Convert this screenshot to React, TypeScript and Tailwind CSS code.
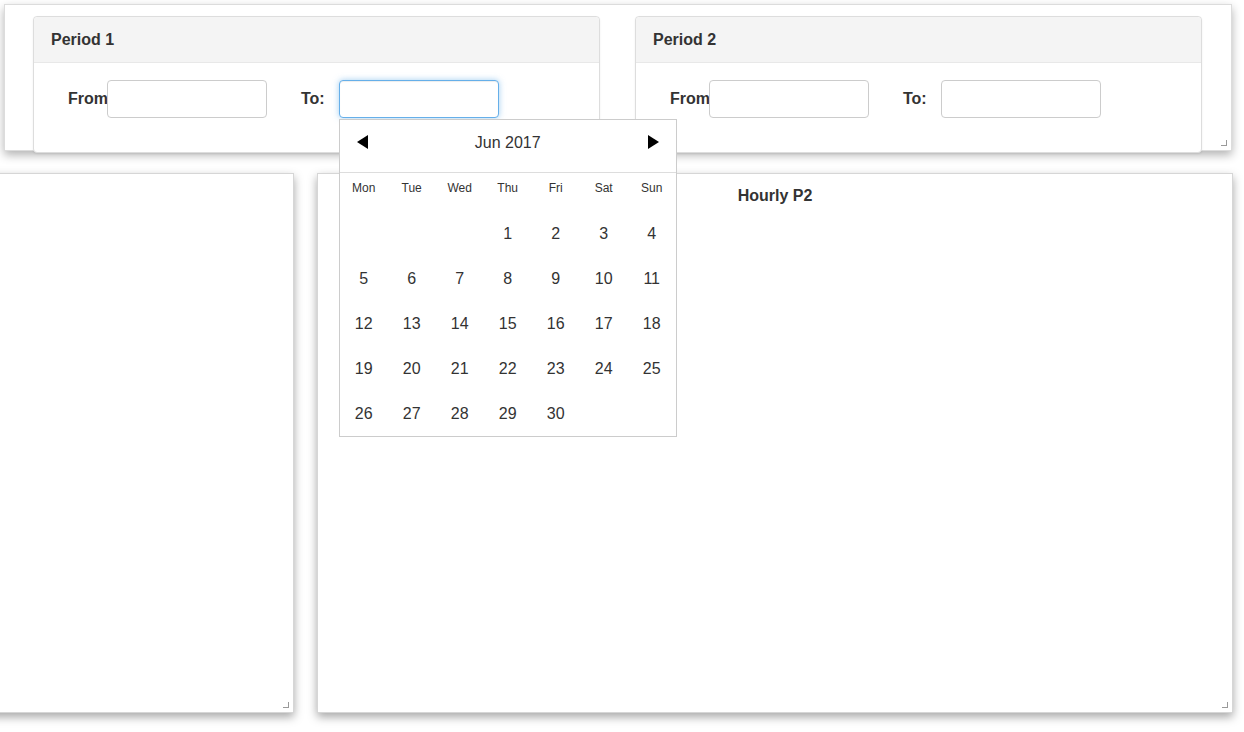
import React from 'react';

const days = ['Mon', 'Tue', 'Wed', 'Thu', 'Fri', 'Sat', 'Sun'];

// June 2017 starts on a Thursday
const weeks: (number | null)[][] = [
  [null, null, null, 1, 2, 3, 4],
  [5, 6, 7, 8, 9, 10, 11],
  [12, 13, 14, 15, 16, 17, 18],
  [19, 20, 21, 22, 23, 24, 25],
  [26, 27, 28, 29, 30, null, null],
];

function ResizeHandle() {
  return (
    <div className="absolute right-[4px] bottom-[4px] w-[6px] h-[6px] border-r border-b border-[#9a9a9a]" />
  );
}

function Calendar() {
  return (
    <div className="absolute left-0 top-[39px] w-[338px] bg-white border border-[#ccc] z-20 text-[#333] font-normal">
      <div className="h-[53px] flex items-start justify-between px-[17px] pt-[11px] border-b border-[#ddd]">
        <svg width="11" height="14" viewBox="0 0 11 14" className="mt-[4px]">
          <polygon points="11,0 11,14 0,7" fill="#000" />
        </svg>
        <span className="text-[16px] leading-[24px]">Jun 2017</span>
        <svg width="11" height="14" viewBox="0 0 11 14" className="mt-[4px]">
          <polygon points="0,0 0,14 11,7" fill="#000" />
        </svg>
      </div>
      <div className="grid grid-cols-7 h-[38px] pt-[6px] text-[12px] leading-[18px]">
        {days.map((d) => (
          <div key={d} className="text-center">{d}</div>
        ))}
      </div>
      {weeks.map((w, i) => (
        <div key={i} className="grid grid-cols-7 h-[45px] items-center text-[16px]">
          {w.map((n, j) => (
            <div key={j} className="text-center">{n ?? ''}</div>
          ))}
        </div>
      ))}
    </div>
  );
}

function PeriodCard({ title, open }: { title: string; open?: boolean }) {
  return (
    <div className="w-[567px] h-[137px] bg-white border border-[#ddd] rounded-[4px] shadow-[0_1px_2px_rgba(0,0,0,0.08)]">
      <div className="h-[46px] bg-[#f4f4f4] border-b border-[#e8e8e8] rounded-t-[4px] px-[17px] flex items-center">
        <span className="text-[16px] font-bold text-[#333]">{title}</span>
      </div>
      <div className="flex items-center pt-[17px] pl-[34px] text-[16px] font-bold text-[#333]">
        <span>From</span>
        <div className="ml-[-1px] w-[160px] h-[38px] border border-[#ccc] rounded-[4px] bg-white" />
        <span className="ml-[34px] mr-[14px]">To:</span>
        <div className="relative">
          <div
            className={
              open
                ? 'w-[160px] h-[38px] border border-[#66afe9] rounded-[4px] bg-white shadow-[inset_0_1px_1px_rgba(0,0,0,0.075),0_0_6px_rgba(102,175,233,0.6)]'
                : 'w-[160px] h-[38px] border border-[#ccc] rounded-[4px] bg-white'
            }
          />
          {open && <Calendar />}
        </div>
      </div>
    </div>
  );
}

export default function App() {
  return (
    <div className="w-[1244px] h-[732px] bg-white overflow-hidden font-['Liberation_Sans',Arial,sans-serif]">
      <div className="pt-[4px] pl-[4px]">
        <div className="relative w-[1228px] h-[147px] bg-white border border-[#dcdcdc] shadow-[0_4px_9px_rgba(0,0,0,0.3)] z-10">
          <div className="flex pt-[11px] pl-[28px] gap-[35px]">
            <PeriodCard title="Period 1" open />
            <PeriodCard title="Period 2" />
          </div>
          <ResizeHandle />
        </div>
      </div>
      <div className="flex mt-[22px] gap-[23px]">
        <div className="relative ml-[-20px] w-[314px] h-[540px] bg-white border border-[#d6d6d6] shadow-[0_4px_9px_rgba(0,0,0,0.35)]">
          <ResizeHandle />
        </div>
        <div className="relative w-[916px] h-[540px] bg-white border border-[#d6d6d6] shadow-[0_4px_9px_rgba(0,0,0,0.35)]">
          <div className="text-center pt-[10px] text-[16px] font-bold text-[#333]">Hourly P2</div>
          <ResizeHandle />
        </div>
      </div>
    </div>
  );
}
